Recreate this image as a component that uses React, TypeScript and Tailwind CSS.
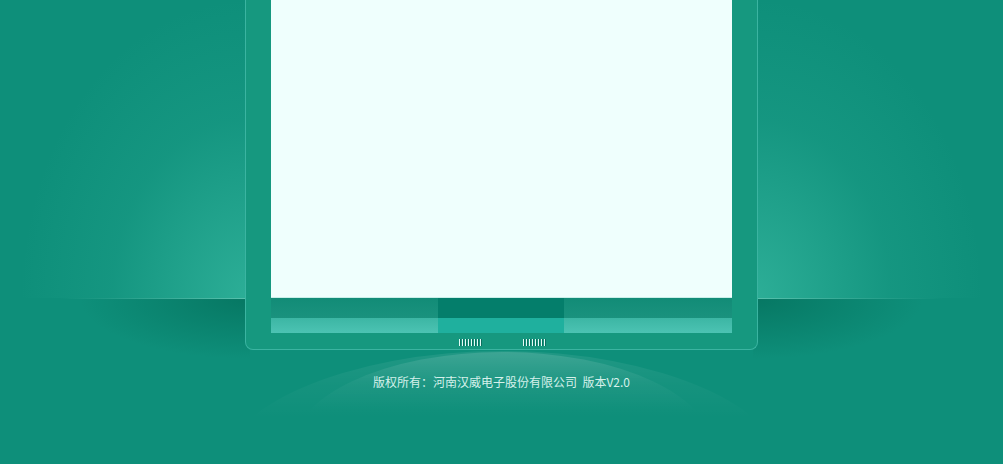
import React from "react";

const Grip = () => (
  <div className="flex gap-px">
    {Array.from({ length: 8 }).map((_, i) => (
      <span key={i} className="h-[7px] w-[2px] border-l border-[#e2fbf6] bg-[#0b6f5f]" />
    ))}
  </div>
);

const StripSeg = ({ w, mid }: { w: string; mid?: boolean }) => (
  <div className={`flex flex-col ${w}`}>
    {mid ? (
      <>
        <div className="h-[20px] bg-[#047e6b]" />
        <div className="h-[15px] bg-[#1fb09e]" />
      </>
    ) : (
      <>
        <div className="h-[20px] bg-[linear-gradient(to_bottom,#128c77,#1a927e)]" />
        <div className="h-[15px] bg-[linear-gradient(to_bottom,#3cb6a4,#4cc3b3)]" />
      </>
    )}
  </div>
);

export default function App() {
  return (
    <div className="relative h-[464px] w-[1003px] overflow-hidden bg-[#0e8f7a] font-['Noto_Sans_CJK_SC','Noto_Sans',sans-serif]">
      {/* background glows */}
      <div className="absolute left-0 top-0 h-[298px] w-[250px] bg-[radial-gradient(ellipse_230px_300px_at_100%_100%,rgba(70,200,175,0.55),rgba(70,200,175,0.12)_60%,transparent)]" />
      <div className="absolute right-0 top-0 h-[298px] w-[250px] bg-[radial-gradient(ellipse_230px_300px_at_0%_100%,rgba(70,200,175,0.55),rgba(70,200,175,0.12)_60%,transparent)]" />
      <div className="absolute left-[60px] top-[298px] h-px w-[190px] bg-[linear-gradient(to_right,transparent,rgba(120,215,195,0.7))]" />
      <div className="absolute right-[60px] top-[298px] h-px w-[190px] bg-[linear-gradient(to_left,transparent,rgba(120,215,195,0.7))]" />
      <div className="absolute left-0 top-[299px] h-[80px] w-[250px] bg-[radial-gradient(ellipse_170px_60px_at_100%_0%,rgba(0,100,80,0.55),transparent)]" />
      <div className="absolute right-0 top-[299px] h-[80px] w-[250px] bg-[radial-gradient(ellipse_170px_60px_at_0%_0%,rgba(0,100,80,0.55),transparent)]" />
      <div className="absolute left-[215px] top-[351px] h-[260px] w-[575px] rounded-[50%] bg-[linear-gradient(to_bottom,rgba(255,255,255,0.08),rgba(255,255,255,0.03)_13%,transparent_26%)]" />
      <div className="absolute left-[290px] top-[352px] h-[200px] w-[425px] rounded-[50%] bg-[linear-gradient(to_bottom,rgba(255,255,255,0.13),rgba(255,255,255,0.04)_15%,transparent_30%)]" />

      {/* panel */}
      <div className="relative flex flex-col items-center">
        <div className="flex h-[350px] w-[513px] flex-col rounded-b-[8px] border border-t-0 border-[#3bb4a1] bg-[#16987f] px-[25px]">
          <div className="h-[298px] border-b border-[#c9efe9] bg-[#effffd]" />
          <div className="flex">
            <StripSeg w="w-[167px]" />
            <StripSeg w="w-[126px]" mid />
            <StripSeg w="w-[168px]" />
          </div>
          <div className="mt-[6px] flex justify-center gap-[41px] pl-[2px]">
            <Grip />
            <Grip />
          </div>
        </div>
        <p className="mt-[25px] whitespace-pre text-[12px] leading-[14px] text-[#d6f1eb]">
          版权所有：河南汉威电子股份有限公司  版本V2.0
        </p>
      </div>
    </div>
  );
}
